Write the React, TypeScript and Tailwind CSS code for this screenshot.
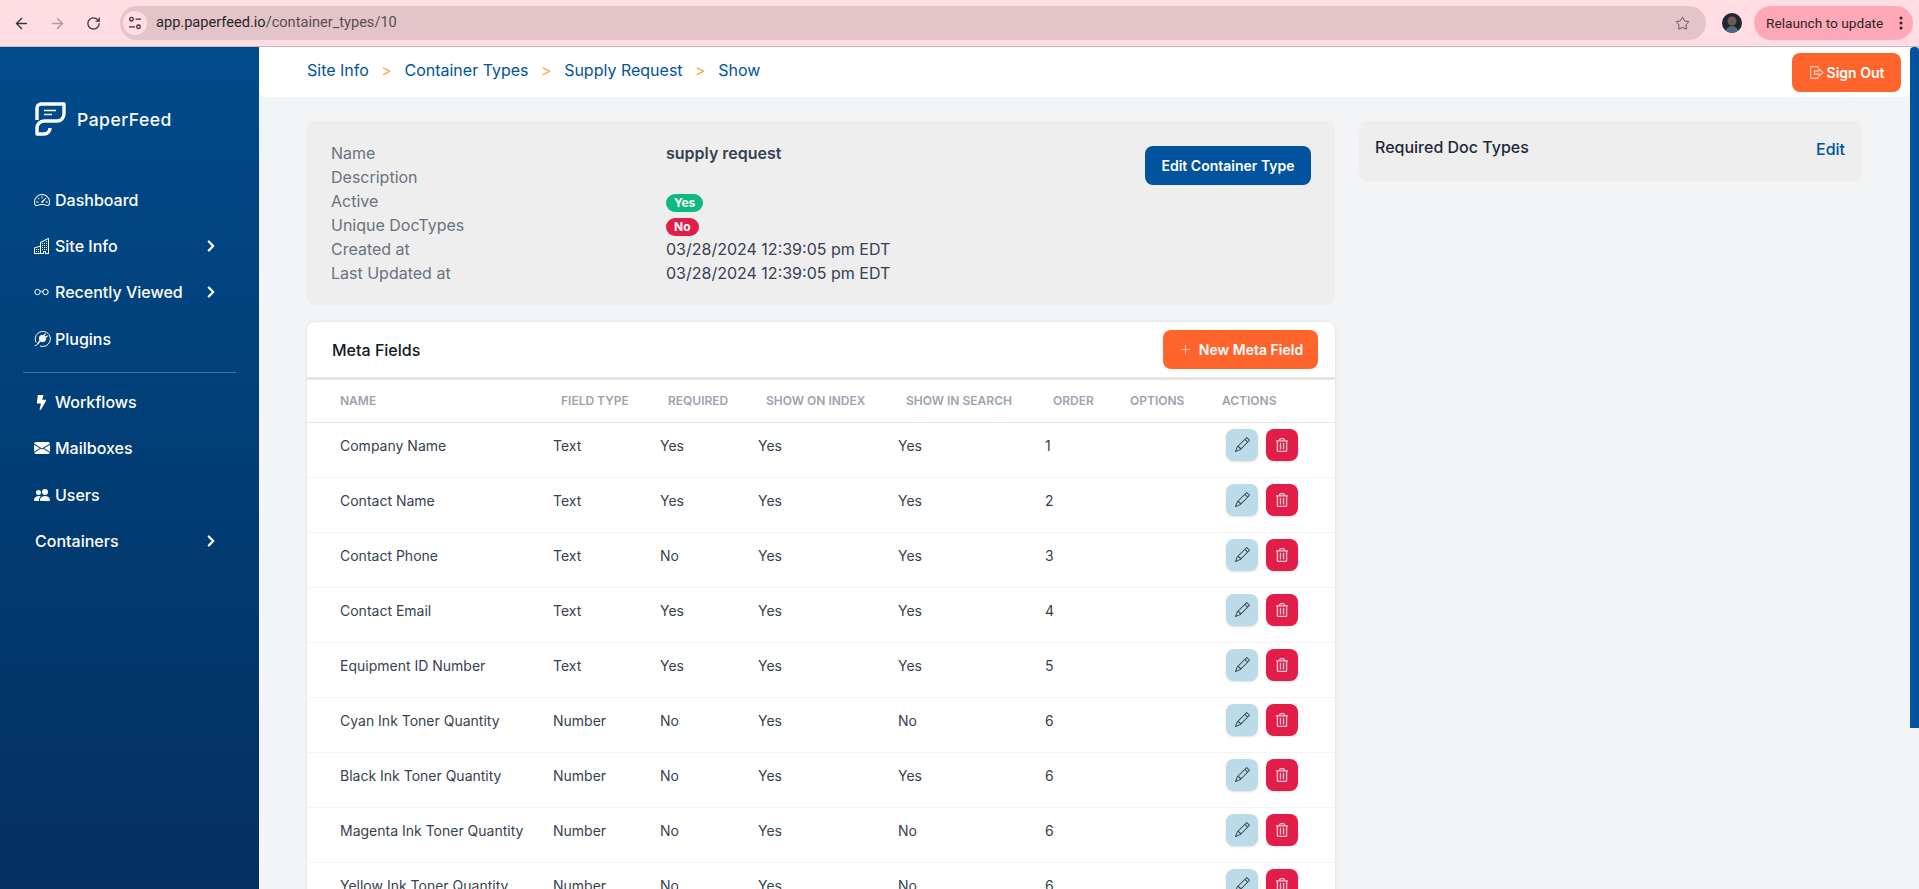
import { ArrowLeft, ArrowRight, ChevronRight, Plus, RotateCw, Star } from 'lucide-react'
import type { ReactNode } from 'react'
import { BsBuildings, BsEnvelopeFill, BsPencil, BsPeopleFill, BsSpeedometer2 } from 'react-icons/bs'
import { FaBolt, FaRegTrashAlt } from 'react-icons/fa'

type Field = {
  name: string
  type: string
  required: string
  onIndex: string
  inSearch: string
  order: number
}

const fields: Field[] = [
  { name: 'Company Name', type: 'Text', required: 'Yes', onIndex: 'Yes', inSearch: 'Yes', order: 1 },
  { name: 'Contact Name', type: 'Text', required: 'Yes', onIndex: 'Yes', inSearch: 'Yes', order: 2 },
  { name: 'Contact Phone', type: 'Text', required: 'No', onIndex: 'Yes', inSearch: 'Yes', order: 3 },
  { name: 'Contact Email', type: 'Text', required: 'Yes', onIndex: 'Yes', inSearch: 'Yes', order: 4 },
  { name: 'Equipment ID Number', type: 'Text', required: 'Yes', onIndex: 'Yes', inSearch: 'Yes', order: 5 },
  { name: 'Cyan Ink Toner Quantity', type: 'Number', required: 'No', onIndex: 'Yes', inSearch: 'No', order: 6 },
  { name: 'Black Ink Toner Quantity', type: 'Number', required: 'No', onIndex: 'Yes', inSearch: 'Yes', order: 6 },
  { name: 'Magenta Ink Toner Quantity', type: 'Number', required: 'No', onIndex: 'Yes', inSearch: 'No', order: 6 },
  { name: 'Yellow Ink Toner Quantity', type: 'Number', required: 'No', onIndex: 'Yes', inSearch: 'No', order: 6 },
]

function TuneIcon() {
  return (
    <svg width="14" height="14" viewBox="0 0 14 14" fill="none" stroke="#3c3436" strokeWidth="1.3">
      <circle cx="3.5" cy="3.2" r="1.8" />
      <path d="M7.5 3.2H13M1 10.8h6" />
      <circle cx="10.5" cy="10.8" r="1.8" />
    </svg>
  )
}

function Logo() {
  return (
    <svg width="31" height="34" viewBox="0 0 31 34" fill="none" stroke="white" strokeWidth="3.4">
      <path d="M2 18V6a4 4 0 0 1 4-4h23v10a7 7 0 0 1-7 7H9a7 7 0 0 0-7 7v6h7a6 6 0 0 0 6-6" strokeLinejoin="round" />
      <path d="M9 8.5h12M9 12.5h8" strokeWidth="1.6" />
    </svg>
  )
}

function GlassesIcon() {
  return (
    <svg width="15" height="8" viewBox="0 0 15 8" fill="none" stroke="white" strokeWidth="1">
      <circle cx="3.5" cy="4" r="2.7" />
      <circle cx="11.5" cy="4" r="2.7" />
      <path d="M6.2 3.6c.8-.6 1.8-.6 2.6 0" />
    </svg>
  )
}

function PluginIcon() {
  return (
    <svg width="17" height="17" viewBox="0 0 17 17" fill="none" stroke="white" strokeWidth="1">
      <path d="M2.2 12.5A7.5 7.5 0 1 1 6 15.9" />
      <path d="M.8 15.6c1.2-.2 2.2-.8 3-1.6" />
      <circle cx="8.5" cy="8.5" r="3.2" fill="white" />
      <path d="M10 5.2l1.6-1.6M12 7.200l1.600-1.600M6 11l-2.500 3" strokeWidth="1.300" />
    </svg>
  )
}

function SignOutIcon() {
  return (
    <svg width="15" height="15" viewBox="0 0 14 14" fill="none" stroke="#ffd2c0" strokeWidth="1" className="shrink-0">
      <path d="M8.500 3V1.500h-7v11h7V11" />
      <path d="M5 5.500h4.500V3.500L13 7l-3.500 3.500v-2H5z" />
    </svg>
  )
}

function NavItem({ icon, label, arrow }: { icon?: ReactNode; label: string; arrow?: boolean }) {
  return (
    <div className="flex h-[46.3px] items-center pr-[39px] pl-[35px] text-base font-medium text-white">
      {icon && <span className="-ml-[1px] flex w-[21px] shrink-0 items-center">{icon}</span>}
      <span className="flex-1">{label}</span>
      {arrow && <ChevronRight size={18} strokeWidth={3} />}
    </div>
  )
}

function Sidebar() {
  return (
    <aside className="h-full w-[259px] shrink-0 bg-gradient-to-b from-[#004b8c] to-[#03305f]">
      <div className="flex items-center gap-[11px] pt-[55px] pl-[35px]">
        <Logo />
        <span className="mt-[3px] text-[17.5px] font-medium tracking-[0.5px] text-white">PaperFeed</span>
      </div>
      <nav className="mt-[40.7px]">
        <NavItem icon={<BsSpeedometer2 size={16} />} label="Dashboard" />
        <NavItem icon={<BsBuildings size={16} />} label="Site Info" arrow />
        <NavItem icon={<GlassesIcon />} label="Recently Viewed" arrow />
        <NavItem icon={<PluginIcon />} label="Plugins" />
        <div className="mx-[23px] mt-[10px] mb-[6px] border-t border-white/25" />
        <NavItem icon={<FaBolt size={15} />} label="Workflows" />
        <NavItem icon={<BsEnvelopeFill size={16} />} label="Mailboxes" />
        <NavItem icon={<BsPeopleFill size={16} />} label="Users" />
        <NavItem label="Containers" arrow />
      </nav>
    </aside>
  )
}

function Breadcrumbs() {
  const items = ['Site Info', 'Container Types', 'Supply Request', 'Show']
  return (
    <div className="flex gap-[12.5px] pt-[11px] text-base text-[#00539c]">
      {items.map((item, i) => (
        <span key={item} className="flex gap-[12.5px]">
          {i > 0 && <span className="text-[#f4ac52]">&gt;</span>}
          <span>{item}</span>
        </span>
      ))}
    </div>
  )
}

function InfoRow({ label, children }: { label: string; children?: ReactNode }) {
  return (
    <div className="flex h-6 items-center">
      <span className="w-[335px] shrink-0 text-[#6b7280]">{label}</span>
      {children}
    </div>
  )
}

function InfoCard() {
  return (
    <section className="flex justify-between rounded-lg bg-[#eeeeee] py-5 pr-6 pl-6 text-base text-[#374151]">
      <div>
        <InfoRow label="Name">
          <span className="font-semibold">supply request</span>
        </InfoRow>
        <InfoRow label="Description" />
        <InfoRow label="Active">
          <span className="mt-[4px] rounded-[9px] bg-[#10b981] px-2 py-[2px] text-xs leading-[14px] font-bold text-white">Yes</span>
        </InfoRow>
        <InfoRow label="Unique DocTypes">
          <span className="mt-[4px] rounded-[9px] bg-[#e11d48] px-2 py-[2px] text-xs leading-[14px] font-bold text-white">No</span>
        </InfoRow>
        <InfoRow label="Created at">03/28/2024 12:39:05 pm EDT</InfoRow>
        <InfoRow label="Last Updated at">03/28/2024 12:39:05 pm EDT</InfoRow>
      </div>
      <button className="mt-[5px] h-[39px] w-[166px] rounded-lg bg-[#00539c] text-sm font-semibold text-white">
        Edit Container Type
      </button>
    </section>
  )
}

function MetaFields() {
  const heads = ['Field Type', 'Required', 'Show on Index', 'Show in Search', 'Order', 'Options', 'Actions']
  return (
    <section className="mt-[17px] rounded-lg bg-white shadow-[0_0_3px_rgba(0,0,0,0.12)]">
      <div className="flex h-[58px] items-center justify-between border-b-[3px] border-[#e5e5e5] pr-[17px] pl-[25px]">
        <h2 className="text-base font-medium text-[#111827]">Meta Fields</h2>
        <button className="flex h-[39px] w-[155px] items-center justify-center gap-[6px] rounded-lg bg-[#ff642d] text-sm font-semibold text-white">
          <Plus size={15} strokeWidth={1.25} className="text-[#ffd2c0]" />
          New Meta Field
        </button>
      </div>
      <table className="w-full table-fixed border-collapse">
        <colgroup>
          <col className="w-[246px]" />
          <col className="w-[107px]" />
          <col className="w-[98px]" />
          <col className="w-[140px]" />
          <col className="w-[147px]" />
          <col className="w-[77px]" />
          <col className="w-[92px]" />
          <col />
        </colgroup>
        <thead>
          <tr className="h-[42px] border-b border-[#e5e7eb] text-left text-xs font-semibold text-[#9ca3af] uppercase">
            <th className="pl-[33px] font-semibold">Name</th>
            {heads.map((h) => (
              <th key={h} className="pl-2 font-semibold">
                {h}
              </th>
            ))}
          </tr>
        </thead>
        <tbody className="text-sm text-[#374151]">
          {fields.map((f) => (
            <tr key={f.name} className="h-[55px] border-b border-[#f3f4f6]">
              <td className="pt-[7px] pl-[33px] align-top">
                <div className="flex h-8 items-center whitespace-nowrap">{f.name}</div>
              </td>
              {[f.type, f.required, f.onIndex, f.inSearch, f.order, ''].map((v, i) => (
                <td key={i} className="pt-[7px] align-top">
                  <div className="flex h-8 items-center">{v}</div>
                </td>
              ))}
              <td className="pt-[6px] pl-3 align-top">
                <div className="flex gap-2">
                  <button className="flex size-8 items-center justify-center rounded-lg bg-[#bcdbe8] text-[#374151] shadow-sm">
                    <BsPencil size={15} />
                  </button>
                  <button className="flex size-8 items-center justify-center rounded-lg bg-[#e11d48] text-[#ffc9d3] shadow-sm">
                    <FaRegTrashAlt size={14} />
                  </button>
                </div>
              </td>
            </tr>
          ))}
        </tbody>
      </table>
    </section>
  )
}

export default function App() {
  return (
    <div className="flex h-screen flex-col overflow-hidden bg-[#f3f4f6] font-['Inter',sans-serif]">
      <header className="flex h-[47px] shrink-0 items-center border-b border-[#c9b5bb] bg-[#ffdde3] pr-[6px] text-[#3c3436] font-['Roboto',sans-serif]">
        <div className="flex w-[120px] shrink-0 items-center pl-[13px]">
          <ArrowLeft size={17} strokeWidth={2} />
          <ArrowRight size={17} strokeWidth={2} className="ml-[19px] text-[#ab9a9e]" />
          <RotateCw size={15} strokeWidth={2} className="ml-[20px]" />
        </div>
        <div className="flex h-[34px] flex-1 items-center rounded-full bg-[#e2c4c9] pr-[16px] pl-[3px]">
          <span className="flex size-[24px] items-center justify-center rounded-full bg-[#ffdde3]">
            <TuneIcon />
          </span>
          <span className="ml-[9px] flex-1 text-[14.6px] text-[#2c2528]">
            app.paperfeed.io<span className="text-[#5a4d51]">/container_types/10</span>
          </span>
          <Star size={15} strokeWidth={1.5} className="text-[#5a4d51]" />
        </div>
        <span className="mx-[12px] ml-[16px] flex size-[20px] shrink-0 items-center justify-center overflow-hidden rounded-full bg-[#20262e]">
          <svg width="20" height="20" viewBox="0 0 20 20">
            <circle cx="10" cy="8" r="4.500" fill="#6d5a50" />
            <path d="M3 20c1-5 4-7 7-7s6 2 7 7z" fill="#4a6a80" />
          </svg>
        </span>
        <div className="flex h-[34px] w-[159px] shrink-0 items-center justify-between rounded-full bg-[#ffa9b8] pr-[10px] pl-[12px] text-[13.7px] text-[#2c2528]">
          <span>Relaunch to update</span>
          <svg width="4" height="14" viewBox="0 0 4 14" fill="#2c2528">
            <circle cx="2" cy="2" r="1.500" />
            <circle cx="2" cy="7" r="1.500" />
            <circle cx="2" cy="12" r="1.500" />
          </svg>
        </div>
      </header>
      <div className="flex min-h-0 flex-1">
        <Sidebar />
        <main className="min-w-0 flex-1">
          <div className="flex h-[50px] items-start justify-between rounded-b-[6px] bg-white pr-[9px] pl-[48px]">
            <Breadcrumbs />
            <button className="mt-[6px] flex h-[39px] w-[109px] items-center justify-center gap-[3px] rounded-lg bg-[#ff642d] text-sm font-semibold text-white">
              <SignOutIcon />
              Sign Out
            </button>
          </div>
          <div className="flex gap-6 pt-6 pr-[48px] pl-[48px]">
            <div className="w-[1028px] shrink-0">
              <InfoCard />
              <MetaFields />
            </div>
            <aside className="flex h-[61px] flex-1 justify-between rounded-lg bg-[#eeeeee] pr-[17px] pl-4 text-base font-medium">
              <span className="pt-[14px] text-[#1f2937]">Required Doc Types</span>
              <span className="pt-[16px] text-[#00539c]">Edit</span>
            </aside>
          </div>
        </main>
        <div className="w-[9px] shrink-0 bg-[#f3f4f6]">
          <div className="h-[681px] rounded-t-[4px] bg-[#00539c]" />
        </div>
      </div>
    </div>
  )
}
